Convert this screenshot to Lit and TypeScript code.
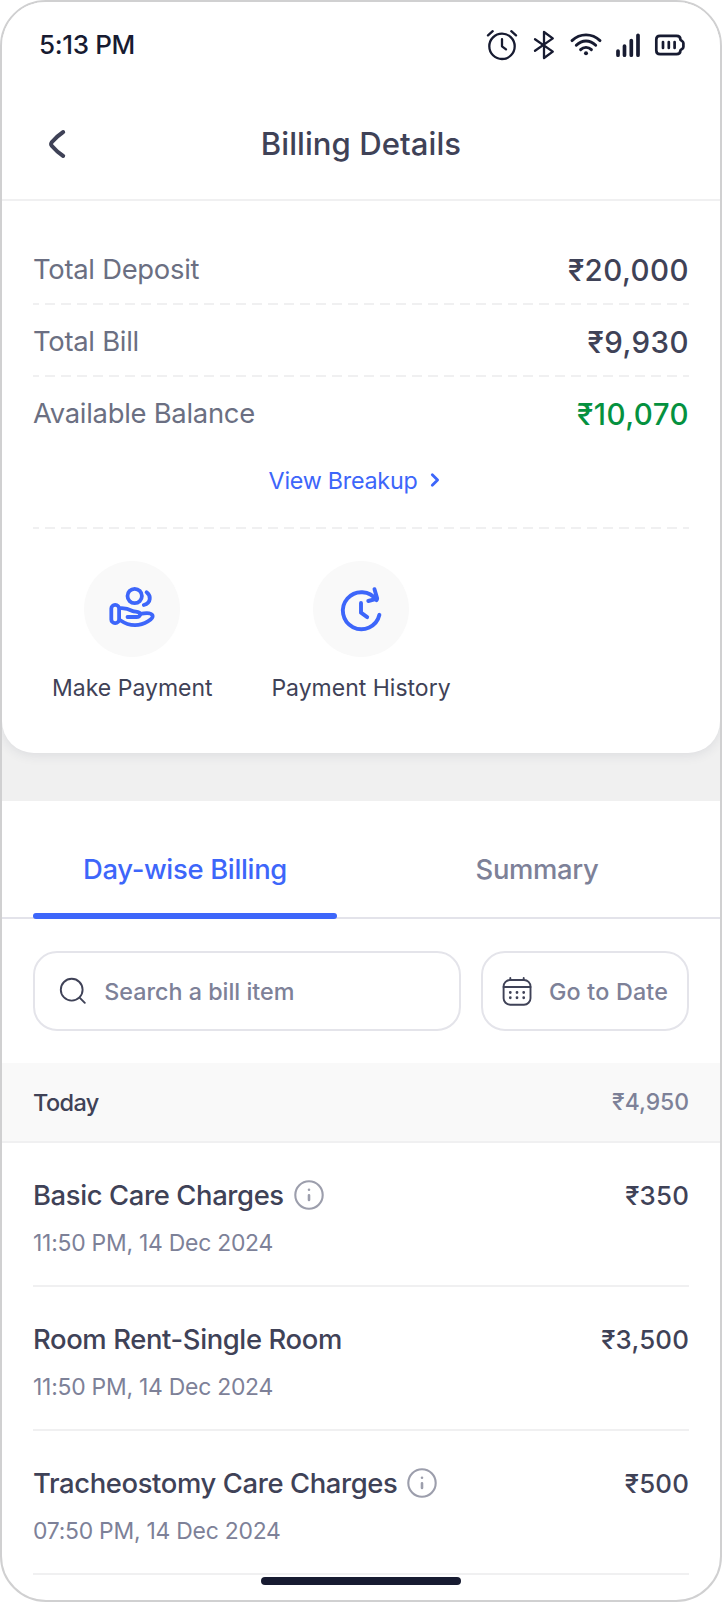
import { LitElement, html, css, svg } from "lit";
import { customElement, property, state } from "lit/decorators.js";

interface BillItem {
  title: string;
  time: string;
  amount: string;
  info: boolean;
}

const summary = [
  { label: "Total Deposit", amount: "₹20,000", tone: "" },
  { label: "Total Bill", amount: "₹9,930", tone: "" },
  { label: "Available Balance", amount: "₹10,070", tone: "good" },
];

const items: BillItem[] = [
  { title: "Basic Care Charges", time: "11:50 PM, 14 Dec 2024", amount: "₹350", info: true },
  { title: "Room Rent-Single Room", time: "11:50 PM, 14 Dec 2024", amount: "₹3,500", info: false },
  { title: "Tracheostomy Care Charges", time: "07:50 PM, 14 Dec 2024", amount: "₹500", info: true },
];

@customElement("status-bar")
class StatusBar extends LitElement {
  static styles = css`
    :host {
      display: flex;
      align-items: center;
      justify-content: space-between;
      height: 86px;
      padding: 0 34px 0 37px;
      color: #171b31;
    }
    .time {
      font-size: 26px;
      font-weight: 500;
      line-height: 32px;
      letter-spacing: -0.35px;
    }
    svg {
      display: block;
      fill: none;
      stroke: currentColor;
      stroke-linecap: round;
      stroke-linejoin: round;
    }
  `;
  render() {
    return html`
      <span class="time">5:13 PM</span>
      <svg width="200" height="32" viewBox="487 29 200 32">
        <g stroke-width="2.3">
          <circle cx="503" cy="46.3" r="12.7" />
          <path d="M503 39.2V46.3L507 49.3M489 35.4L493.7 31.2M512.3 31.2L517 35.4" />
        </g>
        <path stroke-width="2.3" d="M536 39.2L553.8 51.6L545 58V32L553.8 38.4L536 50.8" />
        <g stroke-width="2.9">
          <path d="M573 40.6C581 33 593 33 601 40.6" />
          <path d="M577.3 45.3C583 39.6 591 39.6 596.7 45.3" />
          <path d="M581.6 49.6C584.6 46.6 589.4 46.6 592.4 49.6" />
        </g>
        <circle cx="587" cy="53.3" r="2" fill="currentColor" stroke="none" />
        <path stroke-width="3.7" d="M619 51V55.2M625.5 46V55.2M632.3 40.5V55.2M639 35.3V55.2" />
        <path stroke-width="2.7"
          d="M661 35.8H677.5C680 35.8 681.4 37.2 681.4 39.4C681.4 40.6 684.4 40.7 684.4 43V47C684.4 49.3 681.4 49.4 681.4 50.6C681.4 52.9 680 54.2 677.5 54.2H661C658.7 54.2 657.3 52.9 657.3 50.6V39.4C657.3 37.2 658.7 35.8 661 35.8Z" />
        <path stroke-width="2.7" d="M664 42V48M669.8 42V48M675.6 42V48" />
      </svg>
    `;
  }
}

@customElement("bill-row")
class BillRow extends LitElement {
  @property({ attribute: false }) item!: BillItem;
  static styles = css`
    :host {
      display: flex;
      justify-content: space-between;
      height: 108px;
      padding-top: 34px;
      border-bottom: 2px solid #f0f0f1;
      color: #3f4257;
    }
    .name {
      display: flex;
      align-items: center;
      gap: 10px;
      height: 36px;
      font-size: 27.4px;
      font-weight: 500;
      letter-spacing: -0.37px;
    }
    .time {
      margin-top: 16px;
      font-size: 22.9px;
      line-height: 28px;
      letter-spacing: -0.24px;
      color: #7d8198;
    }
    .amount {
      font-size: 25.8px;
      line-height: 37px;
      font-weight: 500;
      letter-spacing: 0.2px;
    }
    svg {
      display: block;
      stroke: #9c9eac;
      fill: none;
      stroke-linecap: round;
    }
  `;
  render() {
    const { title, time, amount, info } = this.item;
    return html`
      <div>
        <div class="name">
          <span>${title}</span>
          ${info
            ? html`<svg width="30" height="30" viewBox="0 0 30 30">
                <circle cx="15" cy="15" r="13.7" stroke-width="2.1" />
                <path stroke-width="2.6" d="M15 15.3V20M15 9.7V9.8" />
              </svg>`
            : ""}
        </div>
        <div class="time">${time}</div>
      </div>
      <div class="amount">${amount}</div>
    `;
  }
}

@customElement("app-root")
class AppRoot extends LitElement {
  @state() private tab = 0;

  static styles = css`
    :host {
      display: block;
      font-family: Inter, "Noto Sans", sans-serif;
      background: #fff;
    }
    .frame {
      position: relative;
      box-sizing: border-box;
      width: 722px;
      height: 1602px;
      overflow: hidden;
      border: 2px solid #d0d0d1;
      border-radius: 46px;
      background: #fff;
      color: #3f4257;
    }
    svg {
      display: block;
      fill: none;
      stroke: currentColor;
      stroke-linecap: round;
      stroke-linejoin: round;
    }
    .top {
      background: #f0f0f0;
      padding-bottom: 48px;
    }
    .card {
      height: 751px;
      background: #fff;
      border-radius: 0 0 32px 32px;
      box-shadow: 0 2px 12px rgba(40, 50, 80, 0.1);
    }
    .header {
      display: grid;
      grid-template-columns: 60px 1fr 60px;
      align-items: center;
      height: 111px;
      padding: 0 31px;
      border-bottom: 2px solid #f0f0f1;
    }
    .header svg {
      margin-left: 14px;
    }
    h1 {
      margin: 0;
      font-size: 31.1px;
      font-weight: 500;
      line-height: 40px;
      text-align: center;
      letter-spacing: 0.05px;
    }
    .body {
      padding: 32px 31px 0;
    }
    .dashed {
      height: 2px;
      background: repeating-linear-gradient(
        90deg,
        #f0f0f1 0 6px,
        transparent 6px 12px,
        #f0f0f1 12px 15.95px
      );
    }
    .row {
      display: flex;
      align-items: center;
      justify-content: space-between;
      box-sizing: border-box;
      height: 70px;
      padding-top: 2px;
      font-size: 27.4px;
      letter-spacing: -0.27px;
      color: #6b6f82;
    }
    .row .amount {
      padding-top: 2px;
      font-size: 29.5px;
      font-weight: 500;
      letter-spacing: 0.45px;
      color: #3f4257;
    }
    .row .good {
      color: #05913f;
    }
    .link {
      display: flex;
      align-items: center;
      justify-content: center;
      gap: 12px;
      height: 66px;
      margin-bottom: 14px;
      padding-right: 12px;
      font-size: 23.3px;
      letter-spacing: -0.25px;
      color: #3d66fa;
    }
    .actions {
      display: grid;
      grid-template-columns: repeat(3, 1fr);
      gap: 30px;
      padding-top: 32px;
    }
    .action {
      display: flex;
      flex-direction: column;
      align-items: center;
      gap: 16px;
      font-size: 23px;
      line-height: 30px;
      white-space: nowrap;
    }
    .bubble {
      width: 96px;
      height: 96px;
      border-radius: 50%;
      background: #f9f9f9;
      color: #3d66fa;
    }
    .tabs {
      display: grid;
      grid-template-columns: 304px 304px;
      justify-content: space-between;
      height: 116px;
      padding: 0 31px;
      border-bottom: 2px solid #e3e3ea;
    }
    .tab {
      position: relative;
      display: flex;
      align-items: center;
      justify-content: center;
      padding-top: 19px;
      height: 98px;
      font-size: 27.4px;
      font-weight: 500;
      letter-spacing: -0.32px;
      color: #7d8198;
    }
    .tab.on {
      color: #3d66fa;
    }
    .tab.on::after {
      content: "";
      position: absolute;
      left: 0;
      right: 0;
      bottom: -1px;
      height: 6px;
      border-radius: 3px;
      background: #3d66fa;
    }
    .tools {
      display: grid;
      grid-template-columns: 428px 208px;
      justify-content: space-between;
      padding: 32px 31px;
    }
    .field {
      display: flex;
      align-items: center;
      box-sizing: border-box;
      height: 80px;
      border: 2px solid #e4e4ea;
      border-radius: 24px;
      font-size: 23.3px;
      font-weight: 500;
      color: #7d8198;
    }
    .field svg {
      color: #3f4257;
    }
    .search {
      padding-left: 23px;
      gap: 18.3px;
    }
    .date {
      padding-left: 18px;
      gap: 16px;
      letter-spacing: 0.2px;
    }
    .day {
      display: flex;
      align-items: center;
      justify-content: space-between;
      height: 78px;
      padding: 0 31px;
      border-bottom: 2px solid #f0f0f1;
      background: #f9f9f9;
      font-size: 23.5px;
      font-weight: 500;
      letter-spacing: -0.6px;
    }
    .day .total {
      font-size: 22.9px;
      letter-spacing: 0;
      color: #7d8198;
    }
    .list {
      padding: 0 31px;
    }
    .home {
      position: absolute;
      left: 259px;
      bottom: 15px;
      width: 200px;
      height: 8px;
      border-radius: 4px;
      background: #171b31;
    }
  `;

  private payIcon() {
    return svg`<g stroke-width="3.8">
      <circle cx="134.7" cy="596" r="7.2" />
      <path d="M146.6 592.2C151 595.5 151.500 602.800 143.800 605" />
      <rect x="111.300" y="604.900" width="7.800" height="18.200" rx="3.700" />
      <path d="M119.800 608.300C125 607.800 129 609.200 132.500 611C135 612.300 139.800 611 140.200 614.300C140.400 616.300 138.500 617 136.500 617H127.500" />
      <path d="M140.200 613.900C143 613.300 151 611.800 152.600 615.500C153.500 618.500 145 625.200 135 625.200C128 625.200 123.500 622.500 119.800 620" />
    </g>`;
  }

  private historyIcon() {
    return svg`<g stroke-width="3.9">
      <path d="M379.400 614.800A18.500 18.500 0 1 1 376.600 600.200" />
      <path d="M374.500 589.200L377.200 598.600L368.300 601" />
      <path d="M361 603V612.700L367.200 617.200" />
    </g>`;
  }

  render() {
    return html`
      <div class="frame">
        <div class="top">
          <div class="card">
            <status-bar></status-bar>
            <div class="header">
              <svg width="20" height="30" viewBox="47 128 20 30">
                <path stroke-width="4" d="M63.200 131C57.500 134.800 54.500 138 51.700 141.300Q50.500 143 51.700 144.700C54.500 148 57.500 151.200 63.200 155" />
              </svg>
              <h1>Billing Details</h1>
            </div>
            <div class="body">
              ${summary.map(
                (r, i) => html`
                  ${i ? html`<div class="dashed"></div>` : ""}
                  <div class="row">
                    <span>${r.label}</span>
                    <span class="amount ${r.tone}">${r.amount}</span>
                  </div>
                `
              )}
              <div class="link">
                <span>View Breakup</span>
                <svg width="12" height="16" viewBox="430 473.500 12 16">
                  <path stroke-width="2.800" d="M433.300 476.200L438.600 481.500L433.300 486.800" />
                </svg>
              </div>
              <div class="dashed"></div>
              <div class="actions">
                <div class="action">
                  <svg class="bubble" viewBox="84 561 96 96">${this.payIcon()}</svg>
                  <span>Make Payment</span>
                </div>
                <div class="action">
                  <svg class="bubble" viewBox="313 561 96 96">${this.historyIcon()}</svg>
                  <span>Payment History</span>
                </div>
              </div>
            </div>
          </div>
        </div>
        <div class="tabs">
          ${["Day-wise Billing", "Summary"].map(
            (t, i) => html`<div class="tab ${this.tab === i ? "on" : ""}" @click=${() => (this.tab = i)}>${t}</div>`
          )}
        </div>
        <div class="tools">
          <div class="field search">
            <svg width="28" height="28" viewBox="58 977 28 28">
              <g stroke-width="1.900"><circle cx="71.700" cy="989.700" r="10.900" /><path d="M79.600 997.600L84.800 1002.800" /></g>
            </svg>
            <span>Search a bill item</span>
          </div>
          <div class="field date">
            <svg width="32" height="32" viewBox="501 975 32 32">
              <rect x="503.600" y="980" width="26.900" height="24.700" rx="6.500" stroke-width="1.900" />
              <path stroke-width="1.900" d="M503.600 987H530.500M510.300 978V980M523.700 978V980" />
              <path stroke-width="2.800" d="M510.300 992.400V992.500M517 992.400V992.500M523.700 992.400V992.500M510.300 997.700V997.800M517 997.700V997.800M523.700 997.700V997.800" />
            </svg>
            <span>Go to Date</span>
          </div>
        </div>
        <div class="day">
          <span>Today</span>
          <span class="total">₹4,950</span>
        </div>
        <div class="list">${items.map((item) => html`<bill-row .item=${item}></bill-row>`)}</div>
        <div class="home"></div>
      </div>
    `;
  }
}
